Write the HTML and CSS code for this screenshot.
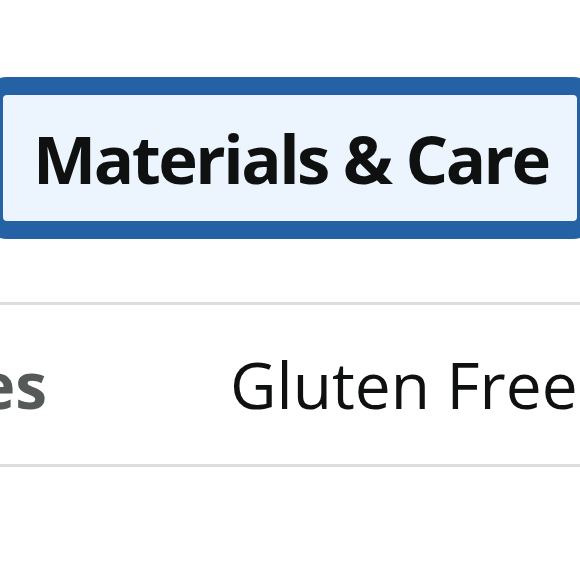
FILE: index.html
```html
<!DOCTYPE html>
<html lang="en">
<head>
  <meta charset="UTF-8">
  <title>Product details</title>
  <link rel="stylesheet" href="styles.css">
</head>
<body>

  <div class="tabs">
    <button class="tab active">Materials &amp; Care</button>
  </div>

  <div class="specs">
    <div class="spec-row">
      <div class="spec-label">Special Features</div>
      <div class="spec-value">Gluten Free</div>
    </div>
  </div>

</body>
</html>
```

FILE: styles.css
```css
body {
  font-family: 'Open Sans', 'Noto Sans', sans-serif;
  background-color: #fff;
  margin: 0;
  padding: 0;
  overflow: hidden;
}
.tabs {
  padding-top: 77px;
  margin: 0 -15px;
}
.tab {
  display: block;
  width: 100%;
  height: 162px;
  padding: 0 0 0 30px;
  text-align: left;
  white-space: nowrap;
  font-family: inherit;
  font-size: 67px;
  font-weight: 700;
  letter-spacing: -2.5px;
  color: #0f1111;
  background-color: #ecf5fd;
  border: 18px solid #2461a5;
  border-radius: 22px;
  cursor: pointer;
}
.specs {
  margin-top: 63px;
  border-top: 3px solid #dddddd;
  border-bottom: 3px solid #dddddd;
}
.spec-row {
  display: flex;
  align-items: center;
  height: 159px;
  margin-left: -560px;
  font-size: 64px;
  white-space: nowrap;
}
.spec-label {
  width: 607px;
  flex-shrink: 0;
  text-align: right;
  font-weight: 700;
  color: #565959;
}
.spec-value {
  padding-left: 183px;
  color: #0f1111;
}
```
